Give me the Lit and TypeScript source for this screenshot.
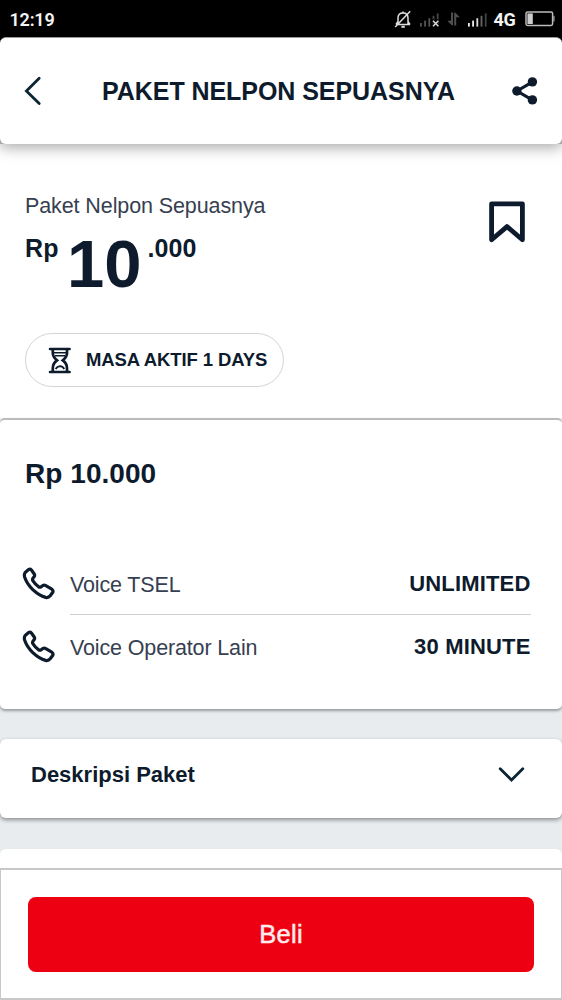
import { LitElement, html, css, svg } from "lit";
import { customElement, property } from "lit/decorators.js";

const phoneIcon = html`<svg width="34" height="34" viewBox="0 0 34 34" fill="none" stroke="#0d1b2c" stroke-width="3.2" stroke-linejoin="round" stroke-linecap="round">
  <path d="M3.2 5.4 L6.6 2.6 Q8.2 1.6 9.4 3 L12.4 7.2 Q13 8.4 12.2 9.6 L10.8 11.4 Q10.2 12.6 11 13.8 Q13.2 17.2 16.6 19.8 Q17.8 20.6 19 19.8 L20.6 18.7 Q22.2 17.8 23.8 18.6 L29.8 22.2 Q31.6 23.6 30.8 25.2 L28.2 28.8 Q26.4 31 23.6 30.4 Q17.2 28.6 10.8 22.6 Q4.8 16.6 2.7 10.2 Q1.8 7.2 3.2 5.4 Z"/>
</svg>`;

@customElement("status-bar")
class StatusBar extends LitElement {
  static styles = css`
    :host { display: flex; align-items: center; height: 37px; background: #000; color: #f4f4f4;
      font-family: Roboto, sans-serif; font-weight: 700; font-size: 18px; padding: 1px 7.5px 0 9.5px; box-sizing: border-box; }
    .time { flex: 1; font-weight: 600; letter-spacing: -0.2px; }
    .net { margin-left: 5.5px; letter-spacing: -0.3px; }
    svg { display: block; }
    .bell { margin-right: 8px; }
    .arrows { margin: 0 8px 0 7px; }
    .battery { margin-left: 9px; }
  `;
  render() {
    const bars = (tones: string[]) =>
      tones.map((t, i) => svg`<rect x=${i * 4.2} y=${11 - i * 2.4} width="1.8" height=${3.6 + i * 2.4} fill=${t} />`);
    return html`
      <span class="time">12:19</span>
      <svg class="bell" width="18" height="19" viewBox="0 0 18 19" fill="none" stroke="#ddd" stroke-width="1.5">
        <path d="M2 14.6 H16.2 M4 14 V8 Q4 3 9 3 Q14 3 14 8 V14 M14 11.5 L16 14.4 M4 11.5 L2 14.4 M1.2 17 L16.2 1.2"/>
        <path d="M7.4 16.8 H10.8" stroke-width="2"/>
        <path d="M9 3 V1.4"/>
      </svg>
      <svg width="20" height="15" viewBox="0 0 20 15">
        ${bars(["#555", "#555", "#555", "#484848", "#484848"])}
        <path d="M12.2 7.8 L18.8 14.4 M18.8 7.8 L12.2 14.4" stroke="#000" stroke-width="2.8"/>
        <path d="M13 8.8 L18.4 14.2 M18.4 8.8 L13 14.2" stroke="#ddd" stroke-width="1.5"/>
      </svg>
      <svg class="arrows" width="13" height="14" viewBox="0 0 13 14" fill="#505050">
        <path d="M4 0.4 H6 V13.2 H4.8 L0.4 8.8 H4 Z M9.2 13.6 H7.2 V0.8 H8.4 L12.8 5.2 H9.2 Z"/>
      </svg>
      <svg width="20" height="15" viewBox="0 0 20 15">${bars(["#eee", "#eee", "#ddd", "#666", "#444"])}</svg>
      <span class="net">4G</span>
      <svg class="battery" width="30" height="16" viewBox="0 0 30 16">
        <rect x="1" y="1" width="26.6" height="13.4" rx="1.6" fill="none" stroke="#bbb" stroke-width="1.5"/>
        <rect x="2.4" y="2.4" width="5.4" height="10.6" fill="#ccc"/>
        <rect x="28.2" y="4.8" width="1.4" height="5.6" fill="#999"/>
      </svg>`;
  }
}

@customElement("quota-row")
class QuotaRow extends LitElement {
  @property() label = "";
  @property() value = "";
  static styles = css`
    :host { display: flex; align-items: center; height: 62.5px; padding: 0 31.5px 0 22px; box-sizing: border-box; }
    svg { display: block; margin: 2px 14px 0 0; flex: none; }
    .line { flex: 1; height: 100%; box-sizing: border-box; display: flex; justify-content: space-between; align-items: center;
      font-size: 21.5px; letter-spacing: -0.14px; }
    :host([divided]) .line { border-bottom: 1px solid #d0d0d2; }
    .label { color: #364050; padding-top: 5px; white-space: nowrap; }
    .value { color: #0d1b2c; font-weight: 700; font-size: 22px; letter-spacing: 0.17px; margin-top: 3px; }
  `;
  render() {
    return html`${phoneIcon}<div class="line"><span class="label">${this.label}</span><span class="value">${this.value}</span></div>`;
  }
}

@customElement("app-root")
class AppRoot extends LitElement {
  static styles = css`
    :host { display: flex; flex-direction: column; height: 1000px; overflow: hidden; background: #e8ecef; color: #0d1b2c;
      font-family: "Liberation Sans", Arial, sans-serif; }
    svg { display: block; flex: none; }
    .top { background: linear-gradient(#000 0 50%, #aaa 50%); flex: none; position: relative; z-index: 1; box-shadow: 0 3px 14px rgba(0,0,0,.36); }
    .header { height: 107px; box-sizing: border-box; background: #fff; border-radius: 6px; display: flex; align-items: center;
      justify-content: space-between; padding: 0 24px; border-top: 1px solid #999; }
    .title { font-size: 25px; font-weight: 700; letter-spacing: -0.06px; white-space: nowrap; padding-top: 1px; margin-left: 3px; }
    .product { height: 274px; flex: none; box-sizing: border-box; background: #fff; padding: 46px 36px 0 25px;
      display: flex; justify-content: space-between; }
    .name { font-size: 21.5px; line-height: 30px; letter-spacing: -0.1px; color: #364050; white-space: nowrap; padding-top: 1px; }
    .price { display: flex; align-items: flex-start; font-weight: 700; margin-top: 9px; height: 68px; }
    .unit { font-size: 25px; line-height: 30px; padding-top: 3px; letter-spacing: 0.1px; }
    .major { font-size: 67px; line-height: 68px; margin: 0 6px 0 8.5px; letter-spacing: 0; }
    .pill { display: flex; align-items: center; box-sizing: border-box; width: 258.5px; height: 54px; margin-top: 35px; border: 1px solid #d3d4d6;
      border-radius: 27px; padding-left: 22px; gap: 14px; font-size: 18.5px; letter-spacing: -0.1px; font-weight: 700; white-space: nowrap; }
    .bookmark { margin-top: 10px; }
    .detail { height: 291px; flex: none; box-sizing: border-box; background: #fff; border-top: 2px solid #bbb; border-radius: 5px;
      box-shadow: 0 2px 3px rgba(0,0,0,.35); }
    .total { font-size: 28px; font-weight: 700; line-height: 36px; margin: 36px 0 60px 25px; letter-spacing: 0.05px; }
    .panel { flex: none; height: 79px; margin-top: 30px; background: #fff; border-radius: 6px; box-shadow: 0 2px 4px rgba(0,0,0,.4);
      display: flex; justify-content: space-between; box-sizing: border-box; padding: 21px 37px 0 31px; font-size: 22px; font-weight: 700; line-height: 30px; }
    .panel svg { margin-top: 6px; }
    .next { flex: none; height: 19px; margin-top: 31px; background: #fff; border-radius: 6px 6px 0 0; }
    .footer { flex: 1; box-sizing: border-box; background: #fff; border: solid #c8c8c8; border-width: 2px 1.5px 2px; padding: 27px 27px 25px; }
    .buy { display: block; width: 100%; height: 75px; border: 0; border-radius: 8px; background: #ed0011; color: #ffecec; padding: 0;
      font: 25.5px "Liberation Sans", Arial, sans-serif; -webkit-text-stroke: 0.5px #ffecec; letter-spacing: 0.3px; }
  `;
  render() {
    return html`
      <div class="top">
        <status-bar></status-bar>
        <div class="header">
          <svg width="18" height="30" viewBox="0 0 18 30" fill="none" stroke="#0b2535" stroke-width="2.8" stroke-linecap="round" stroke-linejoin="miter"><path d="M15.2 2.2 L2.4 15 L15.2 27.6"/></svg>
          <span class="title">PAKET NELPON SEPUASNYA</span>
          <svg width="26" height="28" viewBox="0 0 26 28" fill="#0d1b2c"><path d="M20.6 4.8 L5 14 L20.6 23.2" fill="none" stroke="#0d1b2c" stroke-width="3.1"/><circle cx="20.4" cy="4.9" r="4.7"/><circle cx="4.9" cy="14" r="4.7"/><circle cx="20.4" cy="22.9" r="4.7"/></svg>
        </div>
      </div>
      <section class="product">
        <div>
          <div class="name">Paket Nelpon Sepuasnya</div>
          <div class="price"><span class="unit">Rp</span><span class="major">10</span><span class="unit">.000</span></div>
          <div class="pill">
            <svg width="24" height="27" viewBox="0 0 24 27" fill="none" stroke="#0d1b2c" stroke-width="2.7"><path d="M2 2 H21.6 M2 25 H21.6" stroke-width="2.6" stroke-linecap="round"/><path d="M4.8 2.5 V6 Q4.8 10 9 13.4 Q4.8 16.4 4.8 21 V24.5 M19 2.5 V6 Q19 10 14.8 13.4 Q19 16.4 19 21 V24.5"/><path d="M5 5.8 H19 M7 8.8 H17" stroke-width="1.4"/><path d="M7.6 22 Q9 19.4 12 19.2 Q15 19.4 16.2 22" stroke-width="1.8"/></svg>
            <span>MASA AKTIF 1 DAYS</span>
          </div>
        </div>
        <svg class="bookmark" width="38" height="44" viewBox="0 0 38 44" fill="none" stroke="#0d1b2c" stroke-width="4.8" stroke-linejoin="round"><path d="M3.6 3.8 H34.4 V39.8 L19 26.6 L3.6 39.8 Z"/></svg>
      </section>
      <section class="detail">
        <div class="total">Rp 10.000</div>
        <quota-row divided label="Voice TSEL" value="UNLIMITED"></quota-row>
        <quota-row label="Voice Operator Lain" value="30 MINUTE"></quota-row>
      </section>
      <section class="panel">
        <span>Deskripsi Paket</span>
        <svg width="27" height="17" viewBox="0 0 27 17" fill="none" stroke="#0b2535" stroke-width="2.8" stroke-linecap="round"><path d="M2.2 2.8 L13.5 14 L24.8 2.8"/></svg>
      </section>
      <section class="next"></section>
      <footer class="footer"><button class="buy">Beli</button></footer>`;
  }
}
